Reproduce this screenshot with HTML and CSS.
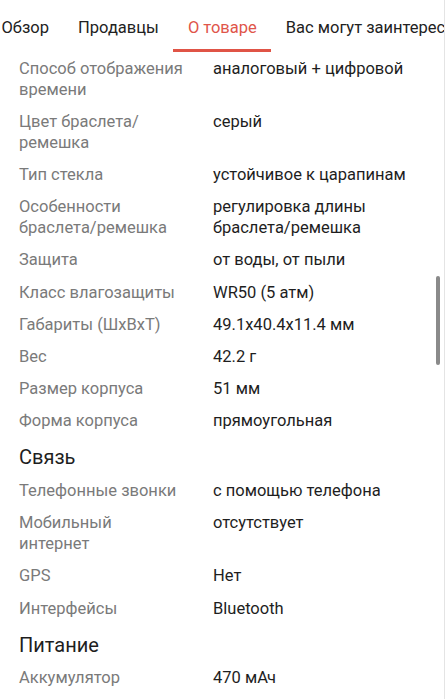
FILE: index.html
```html
<!DOCTYPE html>
<html lang="ru">
<head>
<meta charset="utf-8">
<link rel="stylesheet" href="styles.css">
</head>
<body>
<div class="page">
  <nav class="tabs">
    <div class="tab">Обзор</div>
    <div class="tab">Продавцы</div>
    <div class="tab active">О товаре</div>
    <div class="tab">Вас могут заинтересовать</div>
  </nav>
  <div class="specs">
    <div class="row"><div class="label">Способ отображения времени</div><div class="value">аналоговый + цифровой</div></div>
    <div class="row"><div class="label">Цвет браслета/ ремешка</div><div class="value">серый</div></div>
    <div class="row"><div class="label">Тип стекла</div><div class="value">устойчивое к царапинам</div></div>
    <div class="row"><div class="label">Особенности браслета/ремешка</div><div class="value">регулировка длины браслета/ремешка</div></div>
    <div class="row"><div class="label">Защита</div><div class="value">от воды, от пыли</div></div>
    <div class="row"><div class="label">Класс влагозащиты</div><div class="value">WR50 (5 атм)</div></div>
    <div class="row"><div class="label">Габариты (ШxВxТ)</div><div class="value">49.1x40.4x11.4 мм</div></div>
    <div class="row"><div class="label">Вес</div><div class="value">42.2 г</div></div>
    <div class="row"><div class="label">Размер корпуса</div><div class="value">51 мм</div></div>
    <div class="row"><div class="label">Форма корпуса</div><div class="value">прямоугольная</div></div>
    <h2 class="section">Связь</h2>
    <div class="row"><div class="label">Телефонные звонки</div><div class="value">с помощью телефона</div></div>
    <div class="row"><div class="label">Мобильный интернет</div><div class="value">отсутствует</div></div>
    <div class="row"><div class="label">GPS</div><div class="value">Нет</div></div>
    <div class="row"><div class="label">Интерфейсы</div><div class="value">Bluetooth</div></div>
    <h2 class="section">Питание</h2>
    <div class="row"><div class="label">Аккумулятор</div><div class="value">470 мАч</div></div>
  </div>
  <div class="scrollbar"></div>
</div>
</body>
</html>
```
FILE: styles.css
```css
html, body {
  margin: 0;
  padding: 0;
  background: #fff;
}
body {
  font-family: Roboto, "Noto Sans", sans-serif;
  width: 445px;
  height: 699px;
  overflow: hidden;
}
.page {
  position: relative;
  width: 445px;
  height: 699px;
  overflow: hidden;
  border-right: 1px solid #e4e4e4;
  box-sizing: border-box;
}
.tabs {
  display: flex;
  white-space: nowrap;
  margin-left: -13px;
  height: 52px;
}
.tab {
  flex: none;
  padding: 16px 14.5px 0;
  font-size: 16.5px;
  line-height: 24px;
  color: #222;
  box-sizing: border-box;
  height: 52px;
  border-bottom: 3px solid transparent;
}
.tab.active {
  color: #e0554a;
  border-bottom-color: #e05446;
}
.specs {
  padding: 0 0 0 19px;
}
.row {
  display: grid;
  grid-template-columns: 194px 1fr;
  padding: 5.6px 0;
  font-size: 16.5px;
  line-height: 21px;
}
.label {
  color: #7a7a7a;
  max-width: 165.5px;
}
.value {
  color: #1e1e1e;
}
.section {
  margin: 0;
  padding: 7.5px 0 4px;
  font-size: 20px;
  line-height: 26px;
  font-weight: 400;
  color: #1e1e1e;
}
.scrollbar {
  position: absolute;
  right: 4px;
  top: 276px;
  width: 4px;
  height: 89px;
  border-radius: 2px;
  background: #8a8a8a;
}
```
